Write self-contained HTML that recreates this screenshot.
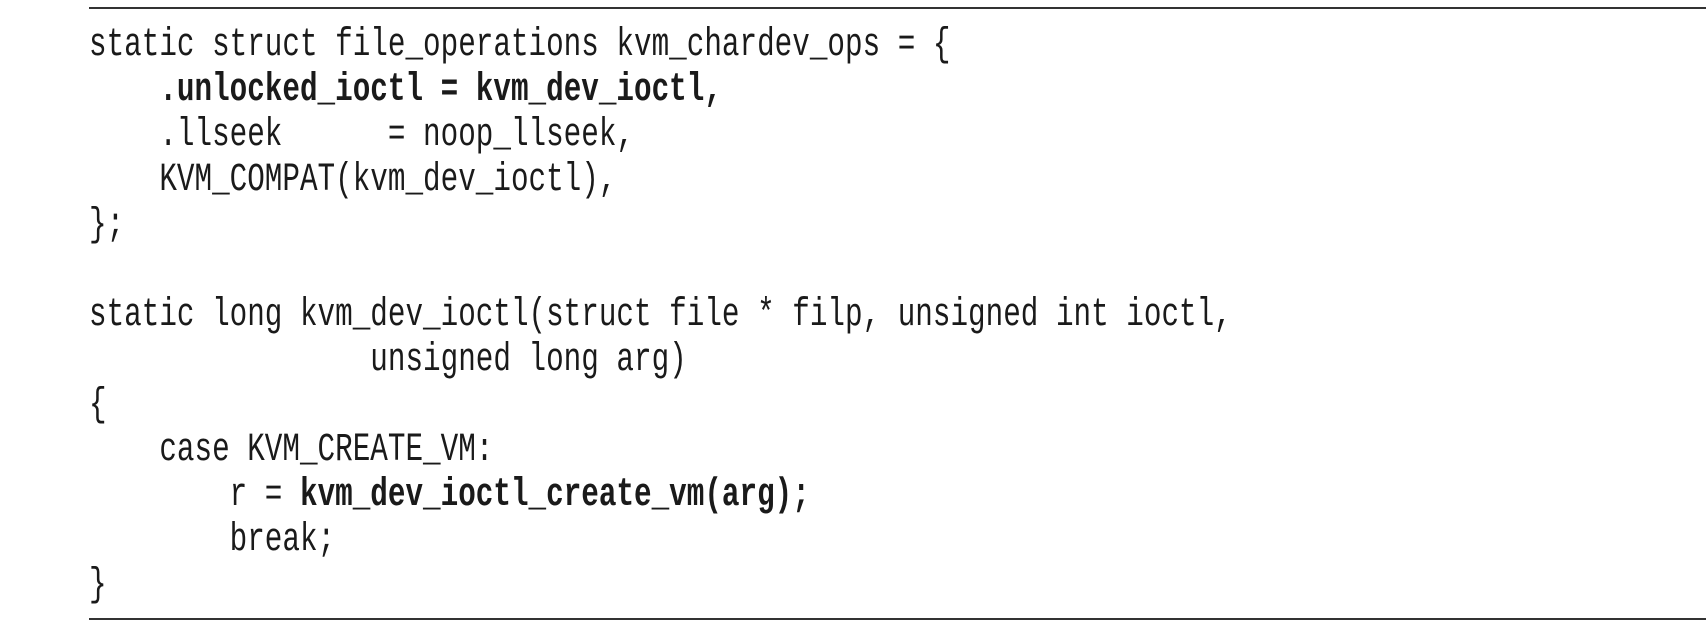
<!DOCTYPE html>
<html><head><meta charset="utf-8"><style>
html,body{margin:0;padding:0;background:#fff;width:1706px;height:630px;overflow:hidden;position:relative}
.hr{position:absolute;left:89px;right:0;height:1.5px;background:#333}
.code{position:absolute;left:89px;top:23px;font-family:"Liberation Mono",monospace;font-size:29.3px;color:#1a1a1a;white-space:pre}
.l{display:block;height:45px;line-height:45px}
.l span.t{display:inline-block;transform:scaleY(1.35);transform-origin:50% 55%}
b{font-weight:bold}
</style></head><body>
<div class="hr" style="top:7px"></div>
<div class="code"><div class="l"><span class="t">static struct file_operations kvm_chardev_ops = {</span></div><div class="l"><span class="t">    <b>.unlocked_ioctl = kvm_dev_ioctl,</b></span></div><div class="l"><span class="t">    .llseek      = noop_llseek,</span></div><div class="l"><span class="t">    KVM_COMPAT(kvm_dev_ioctl),</span></div><div class="l"><span class="t">};</span></div><div class="l"><span class="t"> </span></div><div class="l"><span class="t">static long kvm_dev_ioctl(struct file * filp, unsigned int ioctl,</span></div><div class="l"><span class="t">                unsigned long arg)</span></div><div class="l"><span class="t">{</span></div><div class="l"><span class="t">    case KVM_CREATE_VM:</span></div><div class="l"><span class="t">        r = <b>kvm_dev_ioctl_create_vm(arg);</b></span></div><div class="l"><span class="t">        break;</span></div><div class="l"><span class="t">}</span></div></div>
<div class="hr" style="top:618px"></div>
</body></html>
